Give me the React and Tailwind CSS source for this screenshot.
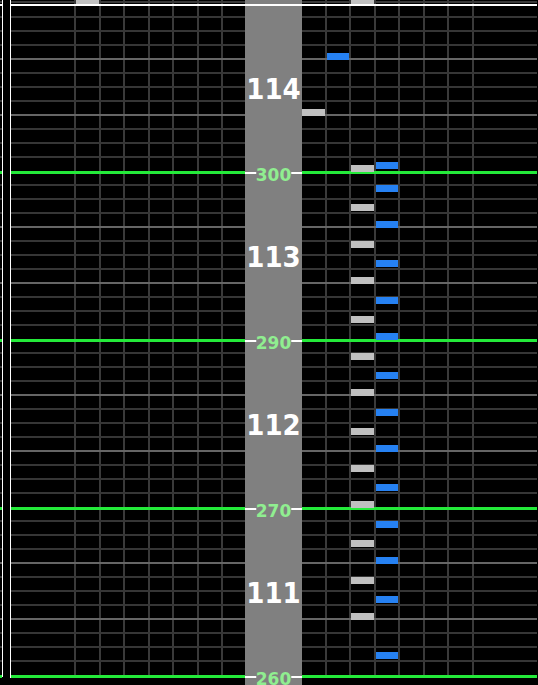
import { Fragment } from "react";

// measures listed top to bottom; bpm sits on the line where the measure starts
const MEASURES = [
  { no: 114, bpm: 300 },
  { no: 113, bpm: 290 },
  { no: 112, bpm: 270 },
  { no: 111, bpm: 260 },
];

const GRAY = "bg-[#c0c0c0]";
const BLUE = "bg-[#2681f2]";

const LEFT_LANES = [
  { w: "w-[25px]", color: GRAY, notes: [-3] },
  { w: "w-[24px]" },
  { w: "w-[25px]" },
  { w: "w-[24px]" },
  { w: "w-[25px]" },
  { w: "w-[24px]" },
  { w: "w-[24px]" },
];

const RIGHT_LANES = [
  { w: "w-[25px]", color: GRAY, notes: [109] },
  { w: "w-[24px]", color: BLUE, notes: [53] },
  {
    w: "w-[25px]",
    color: GRAY,
    notes: [-3, 165, 204, 241, 277, 316, 353, 389, 428, 465, 501, 540, 577, 613],
  },
  {
    w: "w-[24px]",
    color: BLUE,
    notes: [162, 185, 221, 260, 297, 333, 372, 409, 445, 484, 521, 557, 596, 652],
  },
  { w: "w-[25px]" },
  { w: "w-[24px]" },
  { w: "w-[25px]" },
];

function MeasureRows() {
  return (
    <>
      <div className="h-[12px] border-b-2 border-[#363636]" />
      {Array.from({ length: 10 }, (_, i) => (
        <div
          key={i}
          className={`h-[14px] border-b-2 ${i === 2 || i === 6 ? "border-[#666666]" : "border-[#363636]"}`}
        />
      ))}
      <div className="h-[13px]" />
    </>
  );
}

// 678px of grid: head strip, cursor line, then four measures
function Track() {
  return (
    <div className="flex h-[678px] flex-col">
      <div className="h-px" />
      <div className="h-[2px] bg-[#3a3a3a]" />
      <div className="h-px" />
      <div className="h-[2px] bg-white" />
      {MEASURES.map((m) => (
        <Fragment key={m.no}>
          <MeasureRows />
          <div className="h-[3px] bg-[#24ea3a]" />
        </Fragment>
      ))}
    </div>
  );
}

function Lane({ w, color, notes = [], side }) {
  const edge =
    side === "left"
      ? "bg-[linear-gradient(to_right,#3a3a3a_2px,transparent_2px)]"
      : side === "right"
        ? "bg-[linear-gradient(to_left,#3a3a3a_2px,transparent_2px)]"
        : "";
  const inset = side === "left" ? "left-[2px] right-0" : side === "right" ? "left-0 right-[2px]" : "inset-x-0";
  return (
    <div className={`relative shrink-0 ${w}`}>
      <div className={edge}>
        <Track />
      </div>
      {notes.map((top) => (
        <div key={top} className={`absolute h-[7px] ${inset} ${color}`} style={{ top }} />
      ))}
    </div>
  );
}

function MeasureColumn() {
  return (
    <div className="flex w-[57px] shrink-0 flex-col bg-[#808080] font-bold">
      <div className="h-[4px]" />
      <div className="h-[2px] bg-white" />
      {MEASURES.map((m) => (
        <Fragment key={m.no}>
          <div className="flex h-[166px] items-center justify-center text-[29px] leading-none text-white">
            {m.no}
          </div>
          <div className="relative h-[2px] bg-white">
            <span className="absolute left-1/2 top-[2.5px] -translate-x-1/2 -translate-y-1/2 bg-[#808080] font-['DejaVu_Sans',sans-serif] text-[17px] leading-none text-[#90ee90]">
              {m.bpm}
            </span>
          </div>
        </Fragment>
      ))}
    </div>
  );
}

export default function App() {
  return (
    <div className="flex h-[685px] w-[538px] overflow-hidden bg-black font-['DejaVu_Sans_Condensed','DejaVu_Sans',sans-serif]">
      <Lane w="w-[2px]" />
      <div className="h-[677px] w-px shrink-0 bg-white" />
      <div className="w-[7px] shrink-0" />
      <div className="h-[678px] w-px shrink-0 bg-white" />
      <Lane w="w-[63px]" />
      {LEFT_LANES.map((l, i) => (
        <Lane key={i} {...l} side="left" />
      ))}
      <MeasureColumn />
      {RIGHT_LANES.map((l, i) => (
        <Lane key={i} {...l} side="right" />
      ))}
      <Lane w="w-[63px]" />
      <div className="w-px shrink-0" />
    </div>
  );
}
